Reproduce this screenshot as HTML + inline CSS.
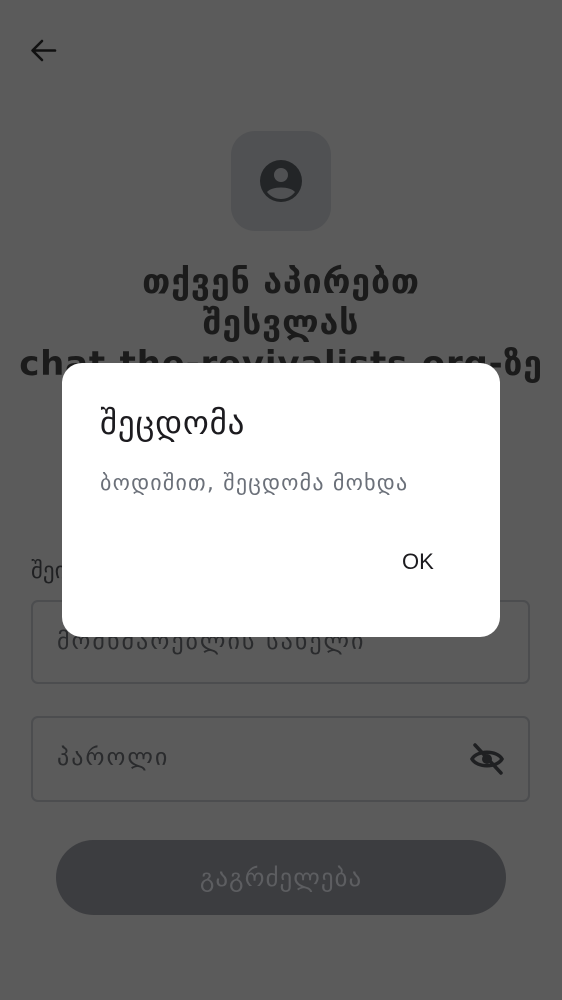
<!DOCTYPE html>
<html><head><meta charset="utf-8"><style>
*{margin:0;padding:0;box-sizing:border-box}
body{width:562px;height:1000px;background:#5b5b5b;position:relative;overflow:hidden;font-family:"DejaVu Sans","Liberation Sans",sans-serif}
.abs{position:absolute}
.title{left:0;width:562px;text-align:center;font-weight:bold;font-size:34px;letter-spacing:0.8px;color:#1b1b1b;line-height:41px;white-space:nowrap}
.inp{left:31px;width:499px;border:2px solid #4c4d4f;border-radius:7px}
.ph{left:57px;font-size:24px;letter-spacing:2px;color:#2a2b2d}
</style></head><body>
<svg class="abs" style="left:28px;top:36px" width="30" height="30" viewBox="0 0 30 30"><path d="M27 14.5H5M14 5L4.5 14.5L14 24" fill="none" stroke="#111" stroke-width="2.6" stroke-linecap="round" stroke-linejoin="round"/></svg>
<div class="abs" style="left:231px;top:131px;width:100px;height:100px;border-radius:24px;background:#505153"></div>
<svg class="abs" style="left:259px;top:159px" width="44" height="44" viewBox="0 0 44 44"><circle cx="22" cy="22" r="21" fill="#232527"/><circle cx="22" cy="16" r="7" fill="#505153"/><path d="M8 33C13 27 31 27 36 33C32 38 27 40 22 40C17 40 12 38 8 33Z" fill="#505153"/></svg>
<div class="abs title" style="top:262px">თქვენ აპირებთ</div>
<div class="abs title" style="top:303px">შესვლას</div>
<div class="abs title" style="top:344px">chat.the-revivalists.org-ზე</div>
<div class="abs" style="left:31px;top:558px;font-size:23px;color:#1f2022">შეიყვანეთ</div>
<div class="abs inp" style="top:600px;height:84px"></div>
<div class="abs ph" style="top:627px">მომხმარებლის სახელი</div>
<div class="abs inp" style="top:716px;height:86px"></div>
<div class="abs ph" style="top:743px">პაროლი</div>
<svg class="abs" style="left:469px;top:742px" width="36" height="34" viewBox="0 0 36 34"><path d="M3 17C8 8 28 8 33 17C28 26 8 26 3 17Z" fill="none" stroke="#1f2022" stroke-width="3.5"/><circle cx="18" cy="17" r="5" fill="#1f2022"/><path d="M6 3L32 31" stroke="#1f2022" stroke-width="3.5" stroke-linecap="round"/></svg>
<div class="abs" style="left:56px;top:840px;width:450px;height:75px;border-radius:38px;background:#3c3d40;color:#5d5e61;font-size:25px;letter-spacing:1px;text-align:center;line-height:75px">გაგრძელება</div>
<div class="abs" style="left:62px;top:363px;width:438px;height:274px;border-radius:20px;background:#fff">
<div class="abs" style="left:38px;top:40px;font-size:33px;letter-spacing:0.8px;color:#1c1b1f">შეცდომა</div>
<div class="abs" style="left:38px;top:108px;font-size:22px;letter-spacing:1.2px;color:#6b7079">ბოდიშით, შეცდომა მოხდა</div>
<div class="abs" style="left:340px;top:186px;font-size:22px;color:#1c1b1f;font-family:'Liberation Sans',sans-serif">OK</div>
</div>
</body></html>
